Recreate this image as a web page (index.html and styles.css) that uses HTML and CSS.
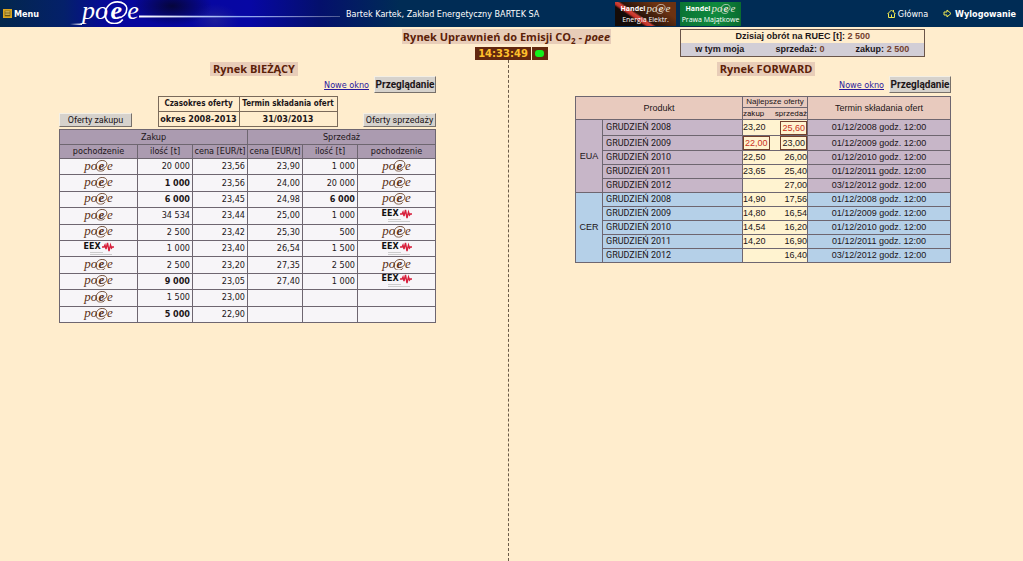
FILE: index.html
```html
<!DOCTYPE html>
<html lang="pl">
<head>
<meta charset="utf-8">
<title>Rynek Uprawnień do Emisji CO2 - poee</title>
<link rel="stylesheet" href="styles.css">
</head>
<body>
<svg class="defs" aria-hidden="true">
  <symbol id="swirl" viewBox="0 0 27 26">
    <path d="M15 18.500c6 .5 10.500-4.500 10.500-9.500 0-5-4.500-8-10.500-8C7 1 1.500 7 1.500 14.500 1.500 21 5 25 11.500 25c4 0 7.500-1.500 9.500-4.500" fill="none" stroke="currentColor" stroke-width="1.800"/>
  </symbol>
  <symbol id="pulse" viewBox="0 0 30 14">
    <path d="M18 5h2l1-2 1 4 1.500-6 1.500 8 1.500-6 1 3 .8-1H30" fill="none" stroke="#d8203c" stroke-width="1.400"/>
    <path d="M6 10.500h13M6 12.500h22" stroke="#ccc"/>
  </symbol>
</svg>

<header class="topbar">
  <a class="top-link menu" href="#"><svg class="icon" viewBox="0 0 8 8"><path d="M0 0h8v8H0z" fill="#d9a520"/><path d="M1.500 1.500h5v5h-5z" fill="#6b5410"/><path d="M2 2.500h4M2 4.500h4" stroke="#e8c860"/></svg>Menu</a>
  <div class="brand">
    <svg class="tail" viewBox="0 0 12 27" aria-hidden="true">
      <defs><linearGradient id="tail" x1="0" x2="1"><stop offset="0" stop-color="#fff" stop-opacity="0"/><stop offset="1" stop-color="#fff"/></linearGradient></defs>
      <path d="M0 23.500h12v1.500H0z" fill="url(#tail)"/>
    </svg>
    <span class="poee">po<span class="at">e<svg><use href="#swirl"/></svg></span>e</span>
    <svg class="beam" viewBox="0 0 200 27" preserveAspectRatio="none" aria-hidden="true">
      <defs><linearGradient id="beam" x1="0" x2="1"><stop offset="0" stop-color="#fff"/><stop offset=".5" stop-color="#8fa8f0"/><stop offset="1" stop-color="#fff" stop-opacity=".4"/></linearGradient></defs>
      <path d="M0 15.500 200 16.300 200 17 0 17.500z" fill="url(#beam)"/>
    </svg>
  </div>
  <p class="user">Bartek Kartek, Zakład Energetyczny BARTEK SA</p>
  <nav class="banners">
    <a class="banner energy" href="#"><span class="banner-name"><b>Handel</b><span class="poee">po<span class="at">e<svg><use href="#swirl"/></svg></span>e</span></span><span>Energia Elektr.</span></a>
    <a class="banner rights" href="#"><span class="banner-name"><b>Handel</b><span class="poee">po<span class="at">e<svg><use href="#swirl"/></svg></span>e</span></span><span>Prawa Majątkowe</span></a>
  </nav>
  <nav class="session">
    <a class="top-link home" href="#"><svg class="icon" viewBox="0 0 9 9"><path d="M.5 5 4.500 1l4 4M1.500 4.500v4h6v-4M4.500 8.500v-3M6.500 1v2" fill="none" stroke="#f0e850"/></svg>Główna</a>
    <a class="top-link logout" href="#"><svg class="icon" viewBox="0 0 9 9"><path d="M1 3h3V1l4 3.500L4 8V6H1z" fill="none" stroke="#f0e850"/></svg>Wylogowanie</a>
  </nav>
</header>

<section class="summary">
  <div class="title-block">
    <h1>Rynek Uprawnień do Emisji CO<sub>2</sub> - <i>poee</i></h1>
    <div class="clock"><time>14:33:49</time><span class="lamp"></span></div>
  </div>
  <div class="turnover">
    <p>Dzisiaj obrót na RUEC [t]: <em>2 500</em></p>
    <p class="mine"><span>w tym moja</span><span>sprzedaż: <em>0</em></span><span>zakup: <em>2 500</em></span></p>
  </div>
</section>

<main class="markets">
  <section class="market spot">
    <h2><span>Rynek BIEŻĄCY</span></h2>
    <div class="body">
      <div class="actions"><a href="#">Nowe okno</a><button type="button" class="browse">Przeglądanie</button></div>
      <div class="offers">
        <button type="button" class="offer">Oferty zakupu</button>
        <table class="period">
          <colgroup><col class="span"><col></colgroup>
          <tr><th>Czasokres oferty</th><th>Termin składania ofert</th></tr>
          <tr><td>okres 2008-2013</td><td>31/03/2013</td></tr>
        </table>
        <button type="button" class="offer">Oferty sprzedaży</button>
      </div>
      <table class="quotes">
        <colgroup><col class="src"><col class="num"><col class="num"><col class="num"><col class="num"><col class="src"></colgroup>
        <thead>
          <tr><th colspan="3">Zakup</th><th colspan="3">Sprzedaż</th></tr>
          <tr class="fields"><th>pochodzenie</th><th>ilość [t]</th><th>cena [EUR/t]</th><th>cena [EUR/t]</th><th>ilość [t]</th><th>pochodzenie</th></tr>
        </thead>
        <tbody>
          <tr><td><span class="poee">po<span class="at">e<svg><use href="#swirl"/></svg></span>e</span></td><td>20 000</td><td>23,56</td><td>23,90</td><td>1 000</td><td><span class="poee">po<span class="at">e<svg><use href="#swirl"/></svg></span>e</span></td></tr>
          <tr><td><span class="poee">po<span class="at">e<svg><use href="#swirl"/></svg></span>e</span></td><td><b>1 000</b></td><td>23,56</td><td>24,00</td><td>20 000</td><td><span class="poee">po<span class="at">e<svg><use href="#swirl"/></svg></span>e</span></td></tr>
          <tr><td><span class="poee">po<span class="at">e<svg><use href="#swirl"/></svg></span>e</span></td><td><b>6 000</b></td><td>23,45</td><td>24,98</td><td><b>6 000</b></td><td><span class="poee">po<span class="at">e<svg><use href="#swirl"/></svg></span>e</span></td></tr>
          <tr><td><span class="poee">po<span class="at">e<svg><use href="#swirl"/></svg></span>e</span></td><td>34 534</td><td>23,44</td><td>25,00</td><td>1 000</td><td><span class="eex">EEX<svg><use href="#pulse"/></svg></span></td></tr>
          <tr><td><span class="poee">po<span class="at">e<svg><use href="#swirl"/></svg></span>e</span></td><td>2 500</td><td>23,42</td><td>25,30</td><td>500</td><td><span class="poee">po<span class="at">e<svg><use href="#swirl"/></svg></span>e</span></td></tr>
          <tr><td><span class="eex">EEX<svg><use href="#pulse"/></svg></span></td><td>1 000</td><td>23,40</td><td>26,54</td><td>1 500</td><td><span class="eex">EEX<svg><use href="#pulse"/></svg></span></td></tr>
          <tr><td><span class="poee">po<span class="at">e<svg><use href="#swirl"/></svg></span>e</span></td><td>2 500</td><td>23,20</td><td>27,35</td><td>2 500</td><td><span class="poee">po<span class="at">e<svg><use href="#swirl"/></svg></span>e</span></td></tr>
          <tr><td><span class="poee">po<span class="at">e<svg><use href="#swirl"/></svg></span>e</span></td><td><b>9 000</b></td><td>23,05</td><td>27,40</td><td>1 000</td><td><span class="eex">EEX<svg><use href="#pulse"/></svg></span></td></tr>
          <tr><td><span class="poee">po<span class="at">e<svg><use href="#swirl"/></svg></span>e</span></td><td>1 500</td><td>23,00</td><td></td><td></td><td></td></tr>
          <tr><td><span class="poee">po<span class="at">e<svg><use href="#swirl"/></svg></span>e</span></td><td><b>5 000</b></td><td>22,90</td><td></td><td></td><td></td></tr>
        </tbody>
      </table>
    </div>
  </section>

  <section class="market forward">
    <h2><span>Rynek FORWARD</span></h2>
    <div class="body">
      <div class="actions"><a href="#">Nowe okno</a><button type="button" class="browse">Przeglądanie</button></div>
      <table class="futures">
        <colgroup><col class="group"><col class="product"><col class="bid"><col class="ask"><col class="term"></colgroup>
        <thead>
          <tr><th colspan="2" rowspan="2">Produkt</th><th colspan="2" class="best">Najlepsze oferty</th><th rowspan="2">Termin składania ofert</th></tr>
          <tr><th class="sub bid">zakup</th><th class="sub ask">sprzedaż</th></tr>
        </thead>
        <tbody class="eua">
          <tr class="first"><th rowspan="5">EUA</th><td class="name">GRUDZIEŃ 2008</td><td class="bid">23,20</td><td class="ask"><span class="mark own">25,60</span></td><td>01/12/2008 godz. 12:00</td></tr>
          <tr><td class="name">GRUDZIEŃ 2009</td><td class="bid"><span class="mark own">22,00</span></td><td class="ask"><span class="mark">23,00</span></td><td>01/12/2009 godz. 12:00</td></tr>
          <tr><td class="name">GRUDZIEŃ 2010</td><td class="bid">22,50</td><td class="ask">26,00</td><td>01/12/2010 godz. 12:00</td></tr>
          <tr><td class="name">GRUDZIEŃ 2011</td><td class="bid">23,65</td><td class="ask">25,40</td><td>01/12/2011 godz. 12:00</td></tr>
          <tr><td class="name">GRUDZIEŃ 2012</td><td class="bid"></td><td class="ask">27,00</td><td>03/12/2012 godz. 12:00</td></tr>
        </tbody>
        <tbody class="cer">
          <tr><th rowspan="5">CER</th><td class="name">GRUDZIEŃ 2008</td><td class="bid">14,90</td><td class="ask">17,56</td><td>01/12/2008 godz. 12:00</td></tr>
          <tr><td class="name">GRUDZIEŃ 2009</td><td class="bid">14,80</td><td class="ask">16,54</td><td>01/12/2009 godz. 12:00</td></tr>
          <tr><td class="name">GRUDZIEŃ 2010</td><td class="bid">14,54</td><td class="ask">16,20</td><td>01/12/2010 godz. 12:00</td></tr>
          <tr><td class="name">GRUDZIEŃ 2011</td><td class="bid">14,20</td><td class="ask">16,90</td><td>01/12/2011 godz. 12:00</td></tr>
          <tr><td class="name">GRUDZIEŃ 2012</td><td class="bid"></td><td class="ask">16,40</td><td>03/12/2012 godz. 12:00</td></tr>
        </tbody>
      </table>
    </div>
  </section>
</main>
</body>
</html>
```

FILE: styles.css
```css
* { box-sizing: border-box; }

body {
  display: flex;
  flex-direction: column;
  min-height: 100vh;
  margin: 0;
  background: #ffedcd;
  color: #1c1518;
  font: 9px/12px "DejaVu Sans Condensed", "DejaVu Sans", sans-serif;
}

h1, h2, p { margin: 0; }
a { color: inherit; }
.defs { position: absolute; width: 0; height: 0; }

/* Logos; the swirl and the pulse lie over the letters */
.poee {
  display: inline-block;
  padding-bottom: 2px;
  color: #5b3216;
  font: italic 13px/12px "Liberation Serif", serif;
  white-space: nowrap;
}
.at { position: relative; margin: 0 0.2em 0 0.1em; font-weight: bold; }
.at svg { position: absolute; left: -0.3em; top: 0.2em; width: 1em; height: 0.9em; }
.eex {
  position: relative;
  display: block;
  width: 30px;
  height: 14px;
  margin: 0 auto;
  color: #111;
  font: bold 8px/10px "DejaVu Sans", sans-serif;
  text-align: left;
}
.eex svg { position: absolute; inset: 0; width: 30px; height: 14px; }

/* Top bar */
.topbar {
  display: flex;
  align-items: center;
  height: 27px;
  padding: 0 7px 0 3px;
  background:
    radial-gradient(ellipse 40px 20px at 172px 6px, #05053c, transparent),
    radial-gradient(ellipse 24px 16px at 215px 20px, #1d1d9a, transparent),
    linear-gradient(90deg, #03274c 0, #04206a 64px, #07079c 110px, #0707a4 250px, #04106c 320px, #002c55 400px);
  color: #fff;
}
.top-link { display: flex; align-items: center; gap: 2px; text-decoration: none; }
.icon { width: 9px; height: 9px; }
.menu { width: 67px; font-weight: bold; }
.brand { display: flex; align-items: center; width: 270px; height: 27px; }
.brand .poee { padding-bottom: 6px; color: #fff; font-size: 26px; line-height: 20px; }
.tail { width: 12px; height: 27px; }
.beam { flex: 1; min-width: 0; height: 27px; }
.user { margin-left: 6px; width: 269px; white-space: nowrap; }
.banners { display: flex; gap: 4px; }
.banner {
  display: block;
  width: 61px;
  height: 24px;
  padding-top: 1px;
  text-align: center;
  text-decoration: none;
  white-space: nowrap;
  font: 7px/10px "Open Sans", sans-serif;
}
.banner-name { display: flex; justify-content: center; align-items: center; gap: 1px; height: 12px; }
.banner .poee { color: #e8e4dc; font-size: 11px; }
.energy { background: linear-gradient(34deg, #150c08 30%, #c33028 34%, #d04438 39%, #2a140a 43%, #6b3212 75%); }
.rights { background: linear-gradient(90deg, #0a7434, #0f8a3e 60%, #0a6c30); }
.session { display: flex; gap: 15px; margin-left: auto; }
.logout { font-weight: bold; gap: 3px; }

/* Title and turnover */
.summary { display: grid; grid-template-columns: 402fr auto 412fr; height: 33px; padding-top: 2px; }
.title-block { grid-column: 2; display: flex; flex-direction: column; align-items: center; gap: 3px; }
h1, h2 { color: #5c2108; font: bold 11px/15px "Open Sans", sans-serif; text-align: center; }
h1 { padding: 0 1px; background: #e8cdb8; white-space: nowrap; }
sub { font-size: 8px; line-height: 0; }
.clock { display: flex; gap: 1px; margin-left: 10px; font: bold 10px/13px "DejaVu Sans", sans-serif; }
.clock time { padding: 0 3px; background: #63280f; color: #ffc02c; }
.lamp { display: grid; place-items: center; width: 16px; background: #63280f; }
.lamp::before { content: ""; width: 9px; height: 7px; border-radius: 3px; background: #12f01c; }
.turnover {
  width: 245px;
  height: 28px;
  margin-left: 69px;
  border: 1px solid #6a5549;
  font: bold 9px/13px "Liberation Sans", sans-serif;
  text-align: center;
}
.turnover em { color: #74412f; font-style: normal; }
.mine { display: flex; justify-content: space-between; padding: 0 15px 0 14px; background: #d2ced6; }

/* Markets */
.markets { flex: 1; display: grid; grid-template-columns: 508fr 515fr; }
.market { padding-top: 1px; }
.forward { border-left: 1px dashed #6b5a48; }
h2 span { display: inline-block; padding: 0 3px; background: #e8cdb8; line-height: 14px; }
.body { padding: 0 72px 0 59px; }
.forward .body { padding-left: 66px; }
.actions { display: flex; justify-content: flex-end; align-items: center; gap: 5px; height: 17px; }
.actions a { color: #2a1a9c; }

button {
  padding: 0;
  border: 1px solid;
  border-color: #f4efe4 #77706a #77706a #f4efe4;
  background: #d6d2cc;
  color: #1c1518;
  white-space: nowrap;
}
.browse { width: 62px; height: 17px; font: bold 10px/14px Roboto, sans-serif; }
.offer { width: 73px; height: 14px; font: 9px/11px Roboto, sans-serif; }
.offers { display: flex; justify-content: space-between; align-items: flex-end; margin: 3px 0 2px; }

table { border-collapse: collapse; }
td, th { padding: 0; border: 1px solid #6e6670; font-weight: normal; }

.period { width: 180px; table-layout: fixed; white-space: nowrap; text-align: center; font: bold 9px/14px "DejaVu Sans Condensed", "DejaVu Sans", sans-serif; }
.period .span { width: 81px; }
.period td, .period th { border-color: #7a6a5a; font-weight: bold; }
.period th { font-size: 8px; }

.quotes { width: 100%; height: 194px; table-layout: fixed; background: #f7f5f8; line-height: 13px; }
.quotes .src { width: 78px; }
.quotes th { background: #ab9bb0; white-space: nowrap; line-height: 14px; }
.quotes .fields th { line-height: 13px; }
.quotes tbody tr { height: 16px; }
.quotes td { padding-right: 2px; text-align: right; }
.quotes td:first-child, .quotes td:last-child { padding: 0; text-align: center; line-height: 0; }

.futures { width: 100%; margin-top: 3px; table-layout: fixed; text-align: center; font: 9px/13px "Liberation Sans", sans-serif; }
.futures .group { width: 27px; }
.futures .product { width: 140px; }
.futures col.bid { width: 32px; }
.futures col.ask { width: 33px; }
.futures thead { background: #e8cabe; }
.futures thead .best { font-size: 8px; line-height: 10px; }
.futures .sub { font: 8px/11px Roboto, sans-serif; }
.futures .bid { border-right: 0; text-align: left; }
.futures .ask { border-left: 0; text-align: right; }
.futures td.bid, .futures td.ask { background: #fff3d0; }
.futures .first { height: 16px; }
.futures .name { padding-left: 3px; font-family: Roboto, sans-serif; text-align: left; }
.eua { background: #c7b6c8; }
.cer { background: #b5d0e8; }
.mark { display: inline-block; padding: 0 1px; border: 1px solid #74402e; line-height: 12px; }
.own { color: #c9301c; }
```
